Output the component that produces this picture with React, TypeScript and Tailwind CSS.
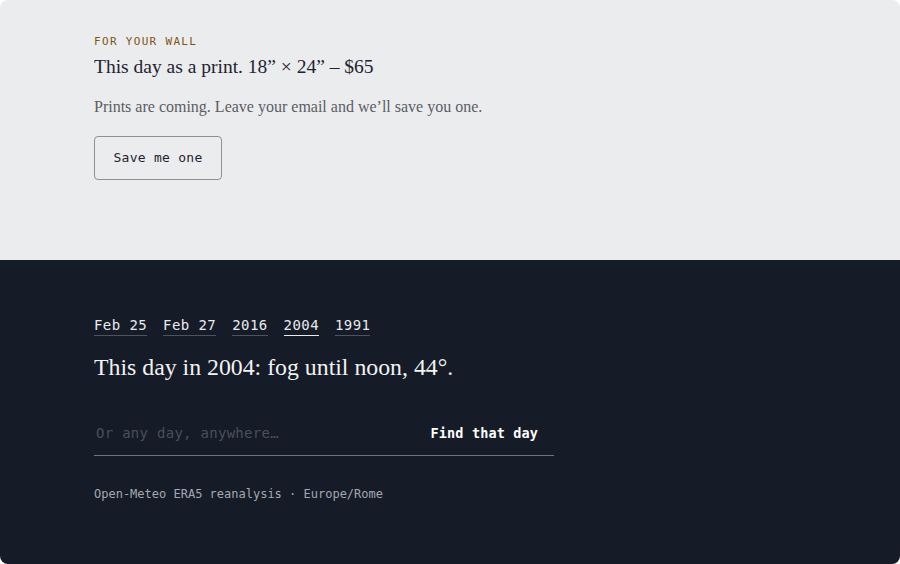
import React from 'react';

const mono = "font-['DejaVu_Sans_Mono','Liberation_Mono',monospace]";
const serif = "font-['Liberation_Serif','DejaVu_Serif',serif]";

const days = [
  { label: 'Feb 25', active: false },
  { label: 'Feb 27', active: false },
  { label: '2016', active: false },
  { label: '2004', active: true },
  { label: '1991', active: false },
];

export default function App() {
  return (
    <div className="w-[900px] h-[564px] bg-white">
      <div className="w-full h-full rounded-lg overflow-hidden flex flex-col">
        <section className="h-[260px] bg-[#ebecee] px-[94px] pt-[36px]">
          <p className={`${mono} text-[11px] leading-[12px] tracking-[0.12em] text-[#7f5515] uppercase`}>
            For your wall
          </p>
          <h2 className={`${serif} mt-[6px] text-[19.5px] leading-[26px] text-[#1f2330]`}>
            This day as a print. 18” × 24” – $65
          </h2>
          <p className={`${serif} mt-[17px] text-[16px] leading-[20px] text-[#5a5d64]`}>
            Prints are coming. Leave your email and we’ll save you one.
          </p>
          <button
            className={`${mono} mt-[19px] w-[128px] h-[44px] rounded-[4px] border border-[#8f9095] text-[13px] tracking-[0.02em] text-[#1f2330] bg-transparent`}
          >
            Save me one
          </button>
        </section>

        <section className="flex-1 bg-[#151b27] px-[94px] pt-[56px]">
          <nav className="flex gap-4">
            {days.map((d) => (
              <a
                key={d.label}
                href="#"
                className={`${mono} text-[14px] leading-[18px] tracking-[0.03em] text-[#e8eaee] border-b pb-[1px] ${
                  d.active ? 'border-[#e8eaee]' : 'border-[#4d5360]'
                }`}
              >
                {d.label}
              </a>
            ))}
          </nav>
          <h1 className={`${serif} mt-[16px] text-[23.8px] leading-[30px] text-[#f1f2f4]`}>
            This day in 2004: fog until noon, 44°.
          </h1>
          <form
            className="mt-[30px] w-[460px] flex items-center border-b border-[#70747c] h-[44px]"
            onSubmit={(e) => e.preventDefault()}
          >
            <input
              className={`${mono} flex-1 bg-transparent pl-[2px] text-[14px] tracking-[0.02em] text-[#e8eaee] placeholder:text-[#4a505b] outline-none`}
              placeholder="Or any day, anywhere…"
            />
            <button
              type="submit"
              className={`${mono} pr-4 text-[13.5px] font-bold tracking-[0.01em] text-white`}
            >
              Find that day
            </button>
          </form>
          <p className={`${mono} mt-[30px] text-[12px] leading-[16px] text-[#a4a8b0]`}>
            Open-Meteo ERA5 reanalysis · Europe/Rome
          </p>
        </section>
      </div>
    </div>
  );
}
